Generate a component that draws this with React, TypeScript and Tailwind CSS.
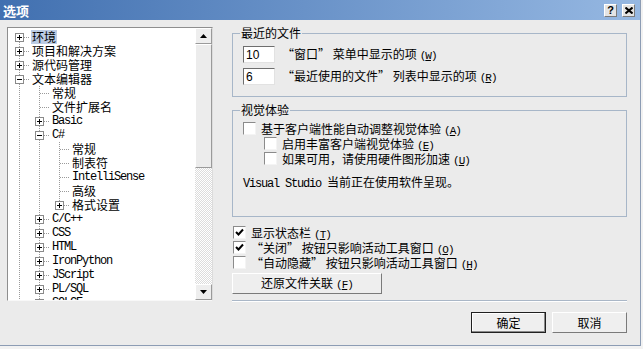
import React from "react";

type Row = {
  label: string;
  level: number;
  box?: "+" | "-";
  up: boolean;
  down: boolean;
  latin?: boolean;
  selected?: boolean;
};

const ROWS: Row[] = [
  { label: "环境", level: 0, box: "+", up: false, down: true, selected: true },
  { label: "项目和解决方案", level: 0, box: "+", up: true, down: true },
  { label: "源代码管理", level: 0, box: "+", up: true, down: true },
  { label: "文本编辑器", level: 0, box: "-", up: true, down: true },
  { label: "常规", level: 1, up: true, down: true },
  { label: "文件扩展名", level: 1, up: true, down: true },
  { label: "Basic", level: 1, box: "+", up: true, down: true, latin: true },
  { label: "C#", level: 1, box: "-", up: true, down: true, latin: true },
  { label: "常规", level: 2, up: true, down: true },
  { label: "制表符", level: 2, up: true, down: true },
  { label: "IntelliSense", level: 2, up: true, down: true, latin: true },
  { label: "高级", level: 2, up: true, down: true },
  { label: "格式设置", level: 2, box: "+", up: true, down: false },
  { label: "C/C++", level: 1, box: "+", up: true, down: true, latin: true },
  { label: "CSS", level: 1, box: "+", up: true, down: true, latin: true },
  { label: "HTML", level: 1, box: "+", up: true, down: true, latin: true },
  { label: "IronPython", level: 1, box: "+", up: true, down: true, latin: true },
  { label: "JScript", level: 1, box: "+", up: true, down: true, latin: true },
  { label: "PL/SQL", level: 1, box: "+", up: true, down: true, latin: true },
  { label: "SQLCE", level: 1, box: "+", up: true, down: true, latin: true },
];

const DOT = "#9a9a9a";

// vertical guide for an ancestor column
function Guide() {
  return (
    <svg width="20" height="14" className="shrink-0">
      <line x1="9.5" y1="0" x2="9.5" y2="14" stroke={DOT} strokeDasharray="1 1" />
    </svg>
  );
}

// connector + expand box for the node itself
function Connector({ row }: { row: Row }) {
  const hasBox = !!row.box;
  return (
    <svg width="20" height="14" className="shrink-0">
      {row.up && <line x1="9.5" y1="0" x2="9.5" y2="7" stroke={DOT} strokeDasharray="1 1" />}
      {row.down && <line x1="9.5" y1="8" x2="9.5" y2="14" stroke={DOT} strokeDasharray="1 1" />}
      <line x1={hasBox ? 14 : 10} y1="7.5" x2="20" y2="7.5" stroke={DOT} strokeDasharray="1 1" />
      {hasBox && (
        <>
          <rect x="5.5" y="3.5" width="8" height="8" fill="#fff" stroke="#8a8a8a" />
          <line x1="7" y1="7.5" x2="12" y2="7.5" stroke="#000" />
          {row.box === "+" && <line x1="9.5" y1="5" x2="9.5" y2="10" stroke="#000" />}
        </>
      )}
    </svg>
  );
}

function TreeRow({ row }: { row: Row }) {
  return (
    <div className="flex h-[14px] items-center pl-[2px]">
      {Array.from({ length: row.level }).map((_, i) => (
        <Guide key={i} />
      ))}
      <Connector row={row} />
      <span
        className={`ml-[1px] h-[14px] whitespace-nowrap px-[1px] leading-[14px] ${
          row.latin ? "font-['Liberation_Mono',monospace] tracking-[-1.2px]" : ""
        } ${row.selected ? "bg-[#bccce4]" : ""}`}
      >
        {row.label}
      </span>
    </div>
  );
}

function ScrollBtn({ dir }: { dir: "up" | "down" }) {
  return (
    <div className="flex h-[16px] items-center justify-center border border-t-white border-l-white border-r-[#9a9a9a] border-b-[#9a9a9a] bg-[#eeeeee]">
      <svg width="7" height="4">
        {dir === "up" ? (
          <polygon points="3.5,0 7,4 0,4" fill="#000" />
        ) : (
          <polygon points="0,0 7,0 3.5,4" fill="#000" />
        )}
      </svg>
    </div>
  );
}

function Check({ checked }: { checked?: boolean }) {
  return (
    <span className="flex h-[13px] w-[13px] shrink-0 items-center justify-center border border-t-[#8b8b8b] border-l-[#8b8b8b] border-r-[#f4f4f4] border-b-[#f4f4f4] bg-white">
      {checked && (
        <svg width="9" height="9">
          <polyline points="1,4 3.5,6.5 8,1.5" fill="none" stroke="#000" strokeWidth="2" />
        </svg>
      )}
    </span>
  );
}

function Key({ k }: { k: string }) {
  return (
    <span className="ml-[3px] font-['Liberation_Mono',monospace] text-[11px] tracking-[-1px]">
      (<span className="underline">{k}</span>)
    </span>
  );
}

function NumBox({ value }: { value: string }) {
  return (
    <div className="flex h-[17px] w-[32px] shrink-0 items-center border border-t-[#6e6e6e] border-l-[#6e6e6e] border-r-[#e2e2e2] border-b-[#e2e2e2] bg-white pl-[2px] font-['Liberation_Sans',sans-serif] text-[12px] leading-none">
      {value}
    </div>
  );
}

function CheckRow({ checked, children, indent }: { checked?: boolean; children: React.ReactNode; indent?: boolean }) {
  return (
    <div className={`flex h-[15px] items-center gap-[5px] ${indent ? "pl-[21px]" : ""}`}>
      <Check checked={checked} />
      <span className="h-[15px] whitespace-nowrap leading-[15px]">{children}</span>
    </div>
  );
}

export default function App() {
  return (
    <div className="h-[349px] w-[643px] bg-[#f2f2f2] font-['Noto_Sans_CJK_SC',sans-serif] text-[12px] leading-[14px] text-black">
      <div className="flex h-[346px] w-[641px] flex-col border-r border-b border-[#8c9cb4] bg-[#ebebeb]">
        {/* title bar */}
        <div className="flex h-[20px] shrink-0 items-center justify-between bg-linear-to-r from-[#4170b0] to-[#96b8e2] pl-[3px] pr-[5px]">
          <span className="text-[13px] font-bold leading-none text-white">选项</span>
          <div className="flex gap-[5px]">
            <div className="flex h-[13px] w-[13px] items-center justify-center border border-t-white border-l-white border-r-[#7a7a7a] border-b-[#7a7a7a] bg-[#e4e4e4] font-['Liberation_Sans',sans-serif] text-[11px] font-bold leading-none">
              ?
            </div>
            <div className="flex h-[13px] w-[13px] items-center justify-center border border-t-white border-l-white border-r-[#7a7a7a] border-b-[#7a7a7a] bg-[#e4e4e4]">
              <svg width="8" height="7">
                <path d="M0.5 0.5 L7.5 6.5 M7.5 0.5 L0.5 6.5" stroke="#000" strokeWidth="2" />
              </svg>
            </div>
          </div>
        </div>

        <div className="flex flex-1">
          {/* tree */}
          <div className="pl-[7px] pt-[7px]">
            <div className="flex h-[274px] w-[206px] border border-t-[#8e8e8e] border-l-[#8e8e8e] border-r-[#dcdcdc] border-b-[#f8f8f8] bg-white">
              <div className="flex-1 overflow-hidden pt-[2px]">
                {ROWS.map((r, i) => (
                  <TreeRow key={i} row={r} />
                ))}
              </div>
              <div className="flex w-[17px] flex-col bg-[#f0f0f0]">
                <ScrollBtn dir="up" />
                <div className="h-[124px] border border-t-white border-l-white border-r-[#9a9a9a] border-b-[#9a9a9a] bg-[#ececec]" />
                <div className="flex-1 bg-[image:repeating-conic-gradient(#ffffff_0%_25%,#dcdcdc_0%_50%)] bg-[length:2px_2px]" />
                <ScrollBtn dir="down" />
              </div>
            </div>
          </div>

          {/* options */}
          <div className="ml-[19px] flex w-[395px] flex-col pt-[6px]">
            <fieldset className="border border-[#a7b6c8]">
              <legend className="ml-[7px] h-[14px] px-[1px] leading-[14px]">最近的文件</legend>
              <div className="flex flex-col gap-[5px] pl-[10px] pt-[6px] pb-[11px]">
                <div className="flex h-[17px] items-center gap-[7px]">
                  <NumBox value="10" />
                  <span className="whitespace-nowrap">
                    “窗口” 菜单中显示的项<Key k="W" />
                  </span>
                </div>
                <div className="flex h-[17px] items-center gap-[7px]">
                  <NumBox value="6" />
                  <span className="whitespace-nowrap">
                    “最近使用的文件” 列表中显示的项<Key k="R" />
                  </span>
                </div>
              </div>
            </fieldset>

            <fieldset className="mt-[6px] border border-[#a7b6c8]">
              <legend className="ml-[7px] h-[14px] px-[1px] leading-[14px]">视觉体验</legend>
              <div className="flex flex-col pl-[10px] pt-[4px] pb-[27px]">
                <CheckRow>
                  基于客户端性能自动调整视觉体验<Key k="A" />
                </CheckRow>
                <CheckRow indent>
                  启用丰富客户端视觉体验<Key k="E" />
                </CheckRow>
                <CheckRow indent>
                  如果可用，请使用硬件图形加速<Key k="U" />
                </CheckRow>
                <div className="mt-[9px] h-[14px] whitespace-nowrap leading-[14px]">
                  <span className="font-['Liberation_Mono',monospace] tracking-[-1.2px]">Visual Studio </span>
                  当前正在使用软件呈现。
                </div>
              </div>
            </fieldset>

            <div className="mt-[8px] flex flex-col pl-[1px]">
              <CheckRow checked>
                显示状态栏<Key k="T" />
              </CheckRow>
              <CheckRow checked>
                “关闭” 按钮只影响活动工具窗口<Key k="O" />
              </CheckRow>
              <CheckRow>
                “自动隐藏” 按钮只影响活动工具窗口<Key k="H" />
              </CheckRow>
            </div>

            <button className="mt-[3px] h-[21px] w-[150px] border border-t-white border-l-white border-r-[#7a7a7a] border-b-[#7a7a7a] bg-[#eeeeee] leading-none">
              还原文件关联<Key k="F" />
            </button>

            <div className="mt-[6px] border-t border-b border-t-[#aab7c7] border-b-white" />

            <div className="mt-[10px] flex justify-end gap-[6px]">
              <button className="h-[21px] w-[75px] border border-[#202020] bg-[#efefef] leading-none shadow-[inset_-1px_-1px_0_#8a8a8a,inset_1px_1px_0_#ffffff]">
                确定
              </button>
              <button className="h-[21px] w-[75px] border border-t-white border-l-white border-r-[#7a7a7a] border-b-[#7a7a7a] bg-[#efefef] leading-none">
                取消
              </button>
            </div>
          </div>
        </div>
      </div>
    </div>
  );
}
